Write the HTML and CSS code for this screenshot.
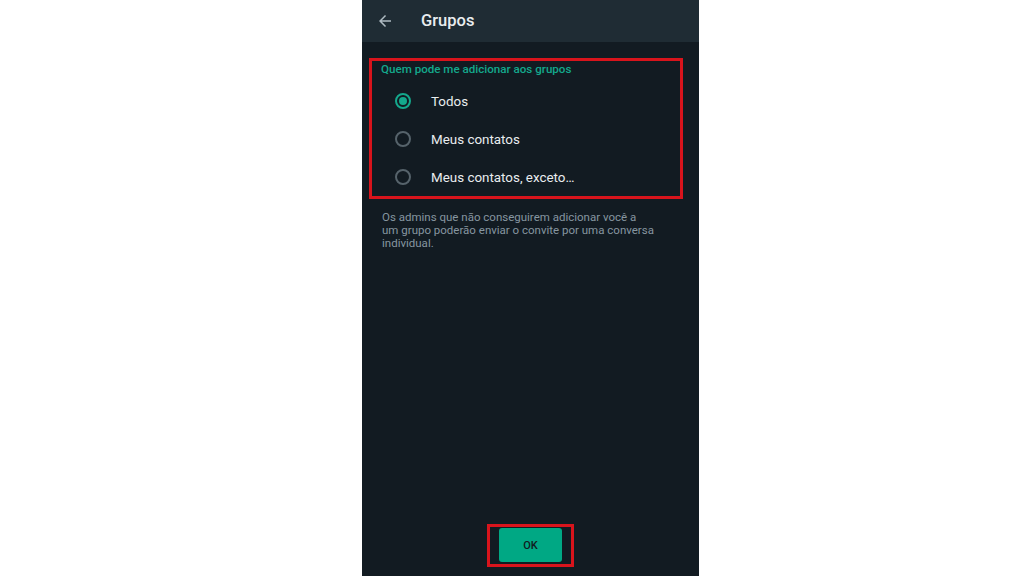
FILE: index.html
```html
<!DOCTYPE html>
<html>
<head>
    <meta charset="UTF-8">
    <title>Grupos</title>
    <link rel="stylesheet" href="styles.css">
</head>
<body>
    <div class="phone">
        <div class="top_bar">
            <svg class="back" width="18" height="18" viewBox="0 0 24 24">
                <path d="M20 11H7.83l5.59-5.59L12 4l-8 8 8 8 1.41-1.41L7.83 13H20v-2z" fill="#aebac1"/>
            </svg>
            <span class="top_title">Grupos</span>
        </div>

        <div class="mark_box options_box">
            <div class="options_title">Quem pode me adicionar aos grupos</div>
            <div class="option"><span class="radio checked"></span><span>Todos</span></div>
            <div class="option"><span class="radio"></span><span>Meus contatos</span></div>
            <div class="option"><span class="radio"></span><span>Meus contatos, exceto…</span></div>
        </div>

        <p class="note">
            Os admins que não conseguirem adicionar você a<br>
            um grupo poderão enviar o convite por uma conversa<br>
            individual.
        </p>

        <div class="mark_box ok_box">
            <button class="ok_btn">OK</button>
        </div>
    </div>
</body>
</html>
```

FILE: styles.css
```css
body{
    margin:0;
    background:#fff;
    font-family:Roboto, "Liberation Sans", sans-serif;
}
.phone{
    width:337px;
    height:576px;
    margin-left:362px;
    background:#121b22;
    display:flex;
    flex-direction:column;
}
.top_bar{
    height:42px;
    background:#1f2c34;
    display:flex;
    align-items:center;
    padding-left:14px;
}
.back{
    display:block;
}
.top_title{
    margin-left:27px;
    color:#e9edef;
    font-size:16.5px;
    font-weight:500;
    margin-top:-2px;
}
.mark_box{
    border:3px solid #d8141c;
}
.options_box{
    margin:16px 16px 0 7px;
    padding:2px 0 0 9px;
}
.options_title{
    color:#14a88c;
    font-size:11.6px;
    font-weight:500;
    line-height:13px;
    margin-bottom:6px;
}
.option{
    height:38px;
    display:flex;
    align-items:center;
    padding-left:14px;
    color:#e9edef;
    font-size:13.4px;
}
.radio{
    width:12px;
    height:12px;
    border:2px solid #56636b;
    border-radius:50%;
    margin-right:20px;
    display:flex;
    align-items:center;
    justify-content:center;
}
.radio.checked{
    border-color:#14a88c;
}
.radio.checked:after{
    content:"";
    width:8px;
    height:8px;
    border-radius:50%;
    background:#14a88c;
}
.note{
    margin:12px 0 0 20px;
    color:#8696a0;
    font-size:11.5px;
    line-height:13px;
}
.ok_box{
    margin-top:auto;
    margin-bottom:9px;
    align-self:center;
    padding:1px 9px 2px;
}
.ok_btn{
    display:block;
    width:63px;
    height:34px;
    border:0;
    border-radius:3px;
    background:#00a884;
    color:#111b21;
    font-family:Roboto, "Liberation Sans", sans-serif;
    font-size:11px;
    font-weight:500;
}
```
